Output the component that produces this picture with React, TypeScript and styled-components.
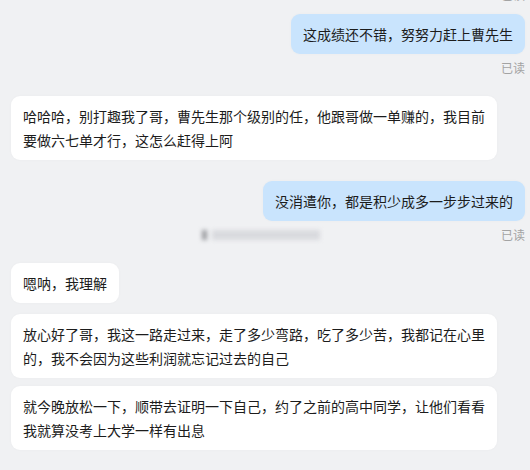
import styled, { createGlobalStyle } from "styled-components";

const GlobalStyle = createGlobalStyle`
  * {
    box-sizing: border-box;
  }

  body {
    margin: 0;
    background: #f0f1f3;
    font-family: "Noto Sans CJK SC", "Noto Sans", sans-serif;
    overflow: hidden;
  }
`;

type Item =
  | { kind: "read"; gap: number; blurred?: boolean }
  | { kind: "msg"; gap: number; mine?: boolean; text: string };

const items: Item[] = [
  { kind: "read", gap: -13 },
  { kind: "msg", gap: 11, mine: true, text: "这成绩还不错，努努力赶上曹先生" },
  { kind: "read", gap: 6 },
  {
    kind: "msg",
    gap: 20,
    text: "哈哈哈，别打趣我了哥，曹先生那个级别的任，他跟哥做一单赚的，我目前要做六七单才行，这怎么赶得上阿",
  },
  { kind: "msg", gap: 21, mine: true, text: "没消遣你，都是积少成多一步步过来的" },
  { kind: "read", gap: 6, blurred: true },
  { kind: "msg", gap: 20, text: "嗯呐，我理解" },
  {
    kind: "msg",
    gap: 11,
    text: "放心好了哥，我这一路走过来，走了多少弯路，吃了多少苦，我都记在心里的，我不会因为这些利润就忘记过去的自己",
  },
  {
    kind: "msg",
    gap: 8,
    text: "就今晚放松一下，顺带去证明一下自己，约了之前的高中同学，让他们看看我就算没考上大学一样有出息",
  },
];

export default function App() {
  return (
    <>
      <GlobalStyle />
      <ChatList>
        {items.map((el, idx) =>
          el.kind === "read" ? (
            <ReadRow key={idx} $gap={el.gap}>
              {el.blurred && (
                <BlurredName>
                  <BlurDot />
                  <BlurBar />
                </BlurredName>
              )}
              <ReadTxt>已读</ReadTxt>
            </ReadRow>
          ) : (
            <MsgRow key={idx} $gap={el.gap} $mine={!!el.mine}>
              <Bubble $mine={!!el.mine}>{el.text}</Bubble>
            </MsgRow>
          )
        )}
      </ChatList>
    </>
  );
}

const ChatList = styled.div`
  width: 530px;
  height: 470px;
  padding: 0 5px 0 11px;
  display: flex;
  flex-direction: column;
`;

const MsgRow = styled.div<{ $gap: number; $mine: boolean }>`
  margin-top: ${(p) => p.$gap}px;
  display: flex;
  justify-content: ${(p) => (p.$mine ? "flex-end" : "flex-start")};
`;

const Bubble = styled.div<{ $mine: boolean }>`
  max-width: 486px;
  padding: 8px 12px;
  border-radius: 9px;
  background: ${(p) => (p.$mine ? "#c9e4fd" : "#ffffff")};
  box-shadow: 0 0 3px rgba(0, 0, 0, 0.03);

  color: #1c1c1c;
  font-size: 14px;
  line-height: 24px;
  word-break: break-all;
`;

const ReadRow = styled.div<{ $gap: number }>`
  margin-top: ${(p) => p.$gap}px;
  height: 16px;
  display: flex;
  align-items: center;
  justify-content: flex-end;
`;

const ReadTxt = styled.div`
  color: #a3a3a3;
  font-size: 12px;
  line-height: 16px;
`;

const BlurredName = styled.div`
  margin-left: 191px;
  margin-right: auto;
  display: flex;
  align-items: center;
  gap: 5px;
  filter: blur(2px);
`;

const BlurDot = styled.div`
  width: 5px;
  height: 10px;
  background: #9a9ca0;
`;

const BlurBar = styled.div`
  width: 108px;
  height: 10px;
  background: #d9dade;
`;
